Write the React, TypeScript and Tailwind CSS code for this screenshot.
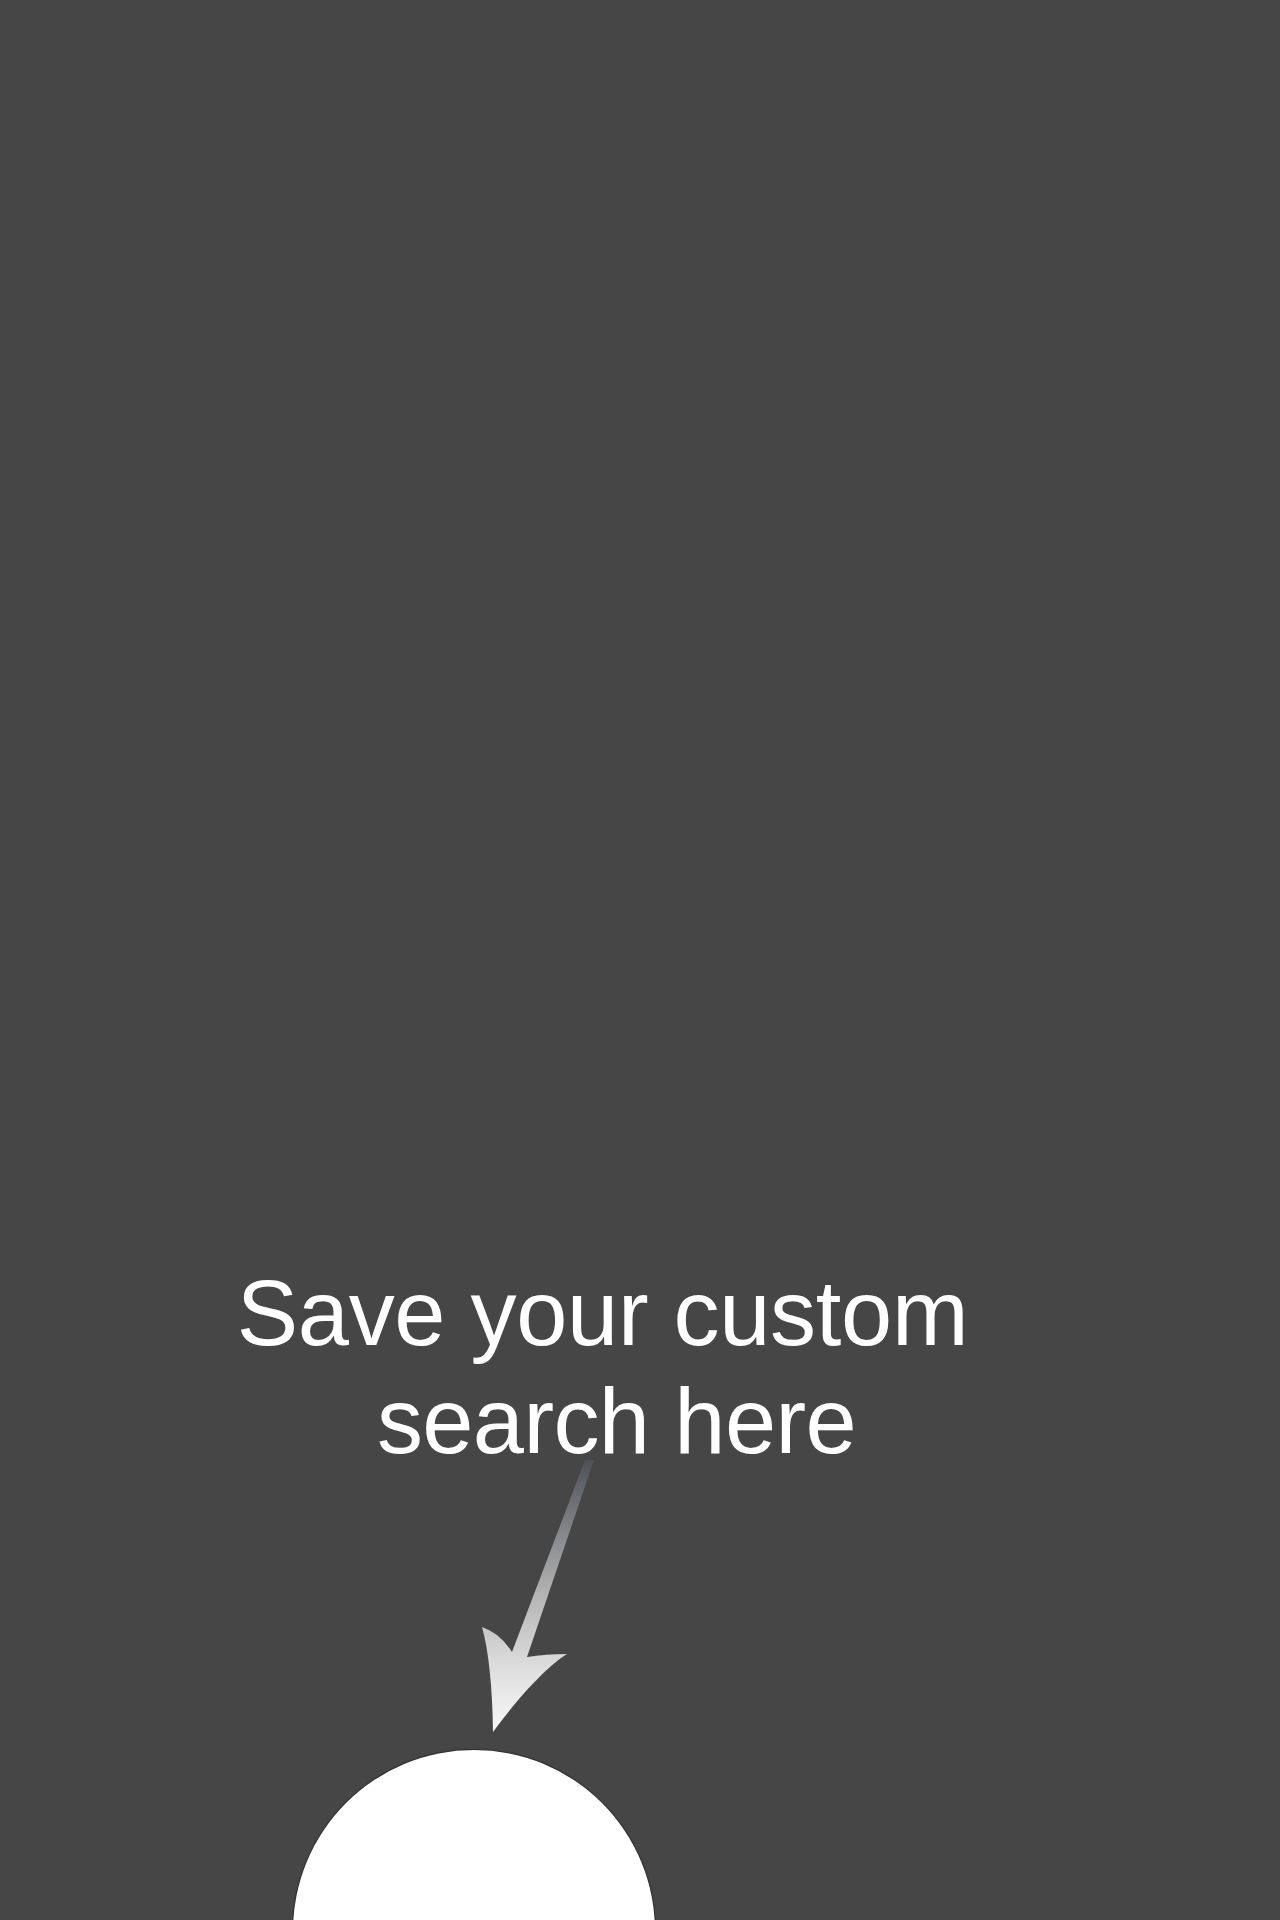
import React from 'react';

// Curved arrow pointing from the hint text down to the save button
function HintArrow() {
  return (
    <svg width="130" height="285" viewBox="0 0 130 285" className="block">
      <defs>
        <linearGradient id="arrowFade" x1="0" y1="0" x2="0" y2="280" gradientUnits="userSpaceOnUse">
          <stop offset="0" stopColor="#4a4d55" />
          <stop offset="0.5" stopColor="#b4b4b4" />
          <stop offset="0.75" stopColor="#dcdcdc" />
          <stop offset="1" stopColor="#fafafa" />
        </linearGradient>
      </defs>
      <path
        d="M115 5 L124 5 L57 202 Q76 199 97 199 C80 209 50 240 23 277 Q22 208 12 172 Q30 178 42 197 Z"
        fill="url(#arrowFade)"
      />
    </svg>
  );
}

export default function App() {
  return (
    <div className="w-full h-[1920px] overflow-hidden bg-[#464646] font-['Liberation_Sans',Arial,sans-serif] text-white">
      {/* Hint text */}
      <div className="pt-[1259px] text-[92px] leading-[108px] tracking-[-0.3px] whitespace-nowrap">
        <div className="w-[1205px] text-center">Save your custom</div>
        <div className="w-[1233px] text-center tracking-[-0.6px]">search here</div>
      </div>

      {/* Arrow */}
      <div className="ml-[470px] -mt-[20px]">
        <HintArrow />
      </div>

      {/* Save button (cut off by the bottom edge) */}
      <div className="ml-[293px] mt-[10px] w-[362px] h-[362px] rounded-full bg-white shadow-[0_0_1px_1px_rgba(0,0,0,0.35)]" />
    </div>
  );
}
